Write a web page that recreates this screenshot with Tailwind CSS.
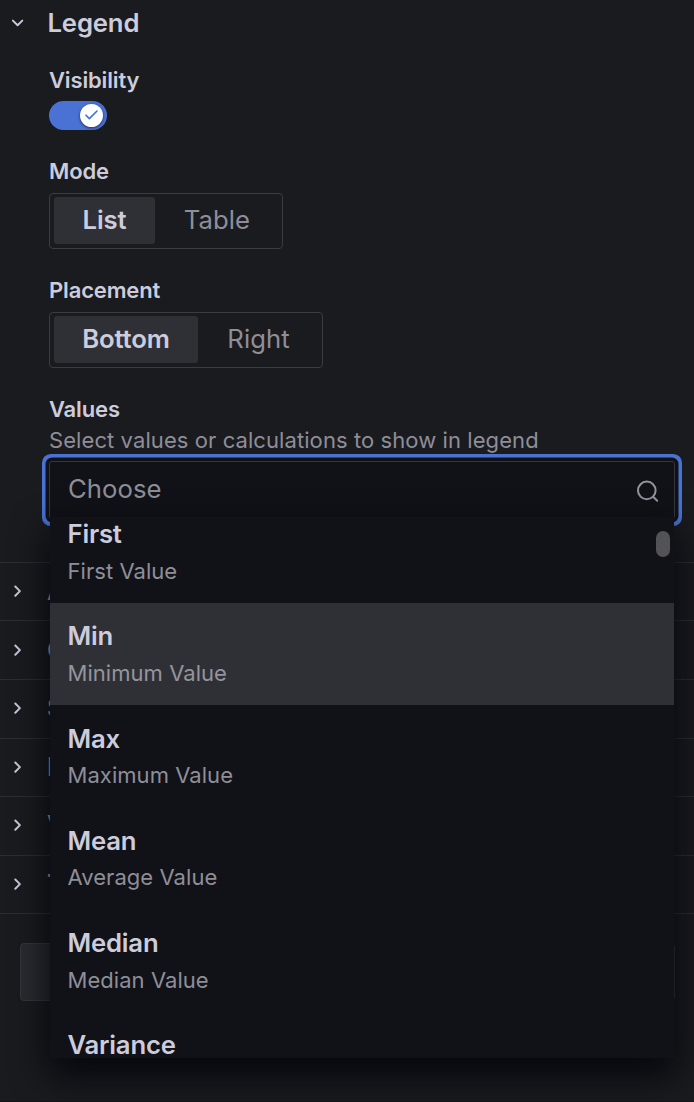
<!DOCTYPE html>
<html lang="en">
<head>
<meta charset="utf-8">
<title>Legend options</title>
<script src="https://cdn.jsdelivr.net/npm/@tailwindcss/browser@4"></script>
</head>
<body class="bg-[#1a1b1f] overflow-hidden">
<div class="relative w-[694px] h-[1102px] overflow-hidden bg-[#1a1b1f] text-[#ccccdc] font-['Inter',sans-serif] font-[430] text-[22px] leading-[24px] tracking-[0.05px]">
  <section class="flex flex-col h-[562px]">
    <header class="flex items-center h-[46px] pl-[11px]">
      <svg class="w-[13px] h-[8px] shrink-0" viewBox="0 0 13 8" fill="none" stroke="currentColor" stroke-width="1.9" stroke-linecap="round" stroke-linejoin="round"><path d="M1.9 1.6 6.6 6.2 11.3 1.6"/></svg>
      <h2 class="pl-[23.5px] text-[25.7px] font-[580] tracking-[-0.15px]">Legend</h2>
    </header>
    <div class="flex flex-col items-start pl-[49px] pt-[22px]">
      <label class="font-[580] tracking-[-0.15px]">Visibility</label>
      <div class="mt-[9px] flex h-[29px] w-[58px] items-center justify-end rounded-full bg-[#4a72d4] pr-[4px]">
        <span class="flex size-[23px] items-center justify-center rounded-full bg-white shadow-[0_1px_3px_rgba(0,0,0,0.6)]">
          <svg class="w-[13px] h-[10px] -mt-px" viewBox="0 0 13 10" fill="none" stroke="#3d71d9" stroke-width="1.6" stroke-linecap="round" stroke-linejoin="round"><path d="M1 5.2 4.4 8.6 12 1"/></svg>
        </span>
      </div>
      <label class="mt-[29px] font-[580] tracking-[-0.15px]">Mode</label>
      <div class="mt-[10px] flex h-[56px] w-[234px] rounded-[4px] border border-[#3b3c42] p-[4px] text-[25.7px]">
        <span class="flex h-[47px] -mt-px w-[101px] items-center justify-center rounded-[3px] bg-[#2f3035] pb-[2px] font-[580] tracking-[-0.15px]">List</span>
        <span class="flex h-[47px] -mt-px flex-1 items-center justify-center pb-[2px] pl-px text-[#8e8e99]">Table</span>
      </div>
      <label class="mt-[29px] font-[580] tracking-[-0.15px]">Placement</label>
      <div class="mt-[10px] flex h-[56px] w-[274px] rounded-[4px] border border-[#3b3c42] p-[4px] text-[25.7px]">
        <span class="flex h-[47px] -mt-px w-[144px] items-center justify-center rounded-[3px] bg-[#2f3035] pb-[2px] font-[580] tracking-[-0.15px]">Bottom</span>
        <span class="flex h-[47px] -mt-px flex-1 items-center justify-center pb-[2px] pl-px text-[#8e8e99]">Right</span>
      </div>
      <label class="mt-[29px] font-[580] tracking-[-0.15px]">Values</label>
      <p class="mt-[7px] tracking-[0.08px] text-[#8e8e99]">Select values or calculations to show in legend</p>
      <div class="mt-[9px] flex h-[58px] w-[626px] items-center justify-between rounded-[3px] border border-[#36373c] bg-[#111217] pb-[2px] pl-[18px] pr-[15px] shadow-[0_0_0_3.5px_#111217,0_0_0_7px_#4a72d4]">
        <span class="text-[25.7px] text-[#8e8e99]">Choose</span>
        <svg class="mt-[4px] size-[23px]" viewBox="0 0 23 23" fill="none" stroke="#94949f" stroke-width="2" stroke-linecap="round"><circle cx="10.8" cy="10.4" r="8.8"/><path d="m17.4 17 3.8 3.8"/></svg>
      </div>
    </div>
  </section>

  <nav class="grid grid-rows-[58px_59px_59px_58px_59px_58px] h-[352px] border-b border-[#2e2f34] text-[25.7px] font-[580] opacity-[0.98]">
    <div class="flex items-center border-t border-[#2e2f34] pb-px pl-[13px]"><svg class="w-[9px] h-[12px] shrink-0" viewBox="0 0 9 12" fill="none" stroke="currentColor" stroke-width="2" stroke-linecap="round" stroke-linejoin="round"><path d="M2.3 1.5 6.9 6.1 2.3 10.7"/></svg><span class="pl-[25px] text-[#a8a8b4]">Axis</span></div>
    <div class="flex items-center border-t border-[#2e2f34] pl-[13px]"><svg class="w-[9px] h-[12px] shrink-0" viewBox="0 0 9 12" fill="none" stroke="currentColor" stroke-width="2" stroke-linecap="round" stroke-linejoin="round"><path d="M2.3 1.5 6.9 6.1 2.3 10.7"/></svg><span class="pl-[25px] text-[#a8a8b4]">Graph styles</span></div>
    <div class="flex items-center border-t border-[#2e2f34] pb-[2px] pl-[13px]"><svg class="w-[9px] h-[12px] shrink-0" viewBox="0 0 9 12" fill="none" stroke="currentColor" stroke-width="2" stroke-linecap="round" stroke-linejoin="round"><path d="M2.3 1.5 6.9 6.1 2.3 10.7"/></svg><span class="pl-[25px] text-[#a8a8b4]">Standard options</span></div>
    <div class="flex items-center border-t border-[#2e2f34] pb-px pl-[13px]"><svg class="w-[9px] h-[12px] shrink-0" viewBox="0 0 9 12" fill="none" stroke="currentColor" stroke-width="2" stroke-linecap="round" stroke-linejoin="round"><path d="M2.3 1.5 6.9 6.1 2.3 10.7"/></svg><span class="pl-[25px] text-[#a8a8b4]">Data links</span></div>
    <div class="flex items-center border-t border-[#2e2f34] pb-[2px] pl-[13px]"><svg class="w-[9px] h-[12px] shrink-0" viewBox="0 0 9 12" fill="none" stroke="currentColor" stroke-width="2" stroke-linecap="round" stroke-linejoin="round"><path d="M2.3 1.5 6.9 6.1 2.3 10.7"/></svg><span class="pl-[25px] text-[#a8a8b4]">Value mappings</span></div>
    <div class="flex items-center border-t border-[#2e2f34] pb-px pl-[13px]"><svg class="w-[9px] h-[12px] shrink-0" viewBox="0 0 9 12" fill="none" stroke="currentColor" stroke-width="2" stroke-linecap="round" stroke-linejoin="round"><path d="M2.3 1.5 6.9 6.1 2.3 10.7"/></svg><span class="pl-[25px] text-[#a8a8b4]">Thresholds</span></div>
  </nav>
  <div class="ml-[20px] mt-[29px] h-[58px] w-[655px] rounded-[4px] border border-[#36373c] bg-[#2a2b30]"></div>

  <!-- Open calculation menu -->
  <div class="absolute left-[50px] top-[517px] h-[541px] w-[624px] rounded-[3px] shadow-[0_16px_36px_2px_rgba(1,4,9,0.85)]">
    <div class="h-full overflow-hidden bg-[#111217]">
      <ul class="-mt-[16px]">
        <li class="h-[102.2px] pl-[17.5px] pt-[21px]"><div class="text-[25.7px] font-[580] tracking-[-0.2px]">First</div><div class="mt-[13px] text-[#8e8e99]">First Value</div></li>
        <li class="h-[102.2px] bg-[#2f3035] pl-[17.5px] pt-[21px]"><div class="text-[25.7px] font-[580] tracking-[-0.2px]">Min</div><div class="mt-[13px] text-[#94949f]">Minimum Value</div></li>
        <li class="h-[102.2px] pl-[17.5px] pt-[21.3px]"><div class="text-[25.7px] font-[580] tracking-[-0.2px]">Max</div><div class="mt-[12.5px] text-[#8e8e99]">Maximum Value</div></li>
        <li class="h-[102.2px] pl-[17.5px] pt-[21px]"><div class="text-[25.7px] font-[580] tracking-[-0.2px]">Mean</div><div class="mt-[12px] text-[#8e8e99]">Average Value</div></li>
        <li class="h-[102.2px] pl-[17.5px] pt-[21px]"><div class="text-[25.7px] font-[580] tracking-[-0.2px]">Median</div><div class="mt-[13px] text-[#8e8e99]">Median Value</div></li>
        <li class="h-[102.2px] pl-[17.5px] pt-[21px]"><div class="text-[25.7px] font-[580] tracking-[-0.2px]">Variance</div></li>
      </ul>
    </div>
    <div class="absolute right-[4px] top-[14px] h-[26px] w-[14px] rounded-full bg-[#535257]"></div>
  </div>
  <div class="absolute inset-x-0 bottom-0 h-px bg-[#141519]"></div>
</div>
</body>
</html>
